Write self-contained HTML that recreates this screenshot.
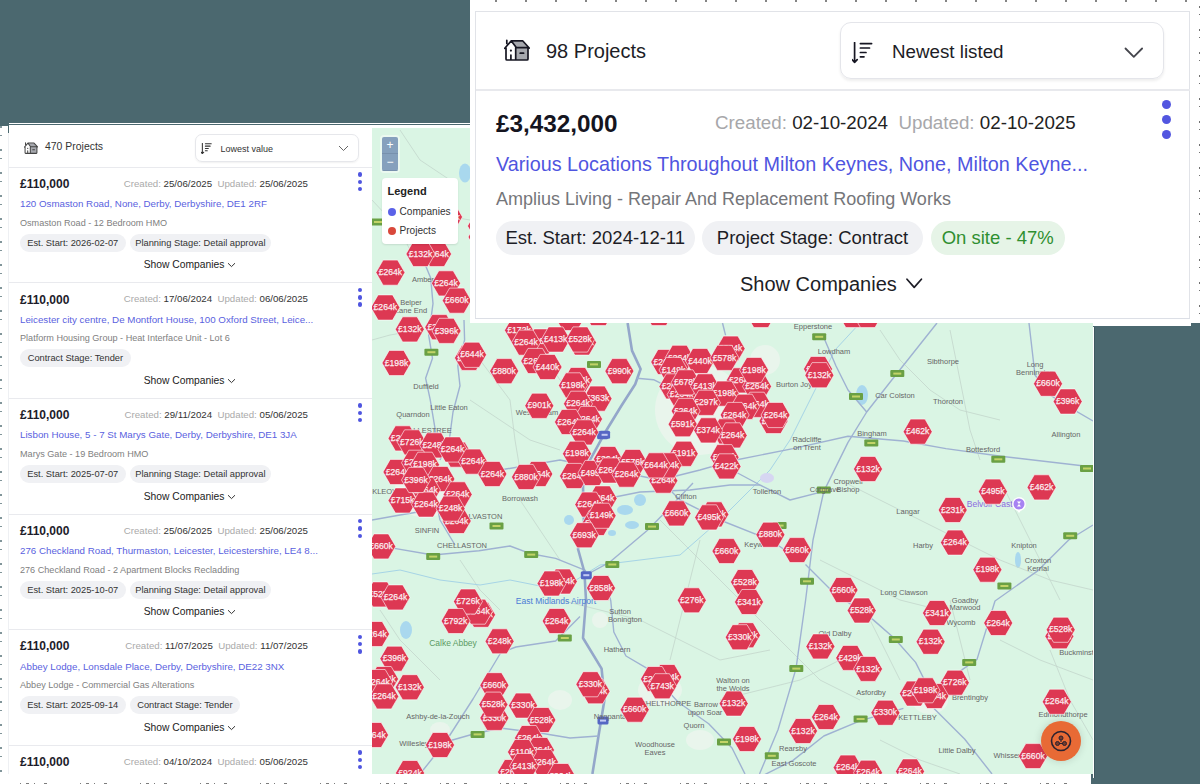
<!DOCTYPE html>
<html><head><meta charset="utf-8">
<style>
*{margin:0;padding:0;box-sizing:border-box}
html,body{width:1200px;height:784px;overflow:hidden;background:#4b686f;font-family:"Liberation Sans",sans-serif;position:relative}
#left{position:absolute;left:0;top:123px;width:372px;height:651px;background:#fff;overflow:hidden}
#lframe{position:absolute;left:8px;top:2px;width:364px;height:649px;border-left:1px solid #eef0f3}
#lvline{position:absolute;left:8px;top:0;width:1px;height:10px;background:#4b686f}
#lslate{position:absolute;left:0;top:0;width:8px;height:3.3px;background:#4b686f}
#lmarks{position:absolute;left:0;top:3px;width:2px;height:648px;opacity:.7;background:repeating-linear-gradient(180deg,#4b686f 0 2px,transparent 2px 9px,#4b686f 9px 10px,transparent 10px 23px)}
#bmarks{position:absolute;left:0;top:8.5px;width:1091px;height:1.5px;opacity:.7;background:repeating-linear-gradient(90deg,transparent 0 20px,#444 20px 21px,transparent 21px 26px,#444 26px 29px,transparent 29px 34px,#444 34px 35px,transparent 35px 44px,#444 44px 47px,transparent 47px 60px)}
#tmarks{position:absolute;left:9px;top:0;width:720px;height:1.5px;opacity:.6;background:repeating-linear-gradient(90deg,transparent 0 16px,#333 16px 18px,transparent 18px 30px)}
#rborder{position:absolute;left:1093px;top:326px;width:2px;height:452px;background:#fff;border-right:1px solid #3e5860}
#lhead{position:absolute;left:9px;top:1px;width:363px;height:43px}
#lhouse{position:absolute;left:15px;top:16px}
#lcount{position:absolute;left:36px;top:17.3px;font-size:10.45px;color:#333}
#lsort{position:absolute;left:185.5px;top:9.7px;width:164px;height:28.5px;border:1px solid #e6e7eb;border-radius:7px;box-shadow:0 1px 2px rgba(0,0,0,.06)}
#lsort svg{position:absolute;left:5.5px;top:8.3px}
#lsort span{position:absolute;left:25px;top:9px;font-size:9px;color:#333}
#lsort .chev{left:142.5px;top:10.5px}
#map{position:absolute;left:372px;top:125px;width:721px;height:649px;background:#daf5e4;overflow:hidden}
#bottom{position:absolute;left:0;top:774px;width:1091px;height:10px;background:#fff}
#rcorner{position:absolute;left:1193px;top:321px;width:7px;height:6px;background:#4b686f}
#top{position:absolute;left:470px;top:0;width:730px;height:323px;background:#fff}
#tframe{position:absolute;left:5px;top:11px;width:715px;height:308px;border:1px solid #e1e3e8;border-bottom:none}
#tframe:after{content:"";position:absolute;left:-1px;right:-1px;bottom:0;height:1px;background:#dcdfe6}
#thouse{position:absolute;left:34px;top:39px}
#tcount{position:absolute;left:76px;top:40px;font-size:20px;color:#1d1d26}
#tsort{position:absolute;left:370px;top:22px;width:324px;height:57px;border:1px solid #e4e5ea;border-radius:11px;box-shadow:0 2px 3px rgba(0,0,0,.07)}
#tsort svg{position:absolute;left:11px;top:19px}
#tsort span{position:absolute;left:51px;top:18.2px;font-size:18.75px;color:#1d1d26}
#tsort .chev{left:283px;top:23.5px}
#tdiv{position:absolute;left:6px;top:89px;width:714px;height:2px;background:#e8e9ed}
#tprice{position:absolute;left:26px;top:110px;font-size:24.3px;font-weight:bold;color:#15151f}
#tdates{position:absolute;left:245px;top:112px;font-size:18.75px;color:#a7a7aa;white-space:nowrap}
#tdates b{font-weight:normal;color:#222}
.tdot{position:absolute;left:692px;width:9px;height:9px;border-radius:50%;background:#5256e0}
#taddr{position:absolute;left:26px;top:153px;font-size:19.8px;color:#4f55e0;white-space:nowrap}
#tsub{position:absolute;left:26px;top:189px;font-size:18px;color:#75767a;white-space:nowrap}
#tchips{position:absolute;left:26px;top:221px;display:flex;gap:7.5px}
.tchip{height:34px;line-height:34px;border-radius:17px;background:#f0f1f4;font-size:18.5px;color:#1d1d26;text-align:center;white-space:nowrap;overflow:hidden}
.tchip.green{background:#e6f4e7;color:#2f8f30}
#tshow{position:absolute;left:270px;top:273px;font-size:20px;color:#1d1d26;white-space:nowrap}
.card{position:absolute;left:9px;width:363px;height:116px;border-top:1px solid #e9eaee}
.price{position:absolute;left:11px;top:9.3px;font-weight:bold;font-size:12px;color:#1d1d2b}
.dates{position:absolute;right:64px;top:10px;font-size:9.7px;color:#aaa;white-space:nowrap}
.dates b{font-weight:normal;color:#333}
.addr{position:absolute;left:11px;top:30.5px;font-size:9.75px;color:#5a5fe0;white-space:nowrap}
.sub{position:absolute;left:11px;top:50px;font-size:9.1px;color:#808080;white-space:nowrap}
.chips{position:absolute;left:11px;top:66px;display:flex;gap:4px}
.chip{height:18px;line-height:18px;border-radius:9px;background:#f0f1f4;font-size:9.3px;color:#333;text-align:center;white-space:nowrap;overflow:hidden}
.show{position:absolute;left:6px;top:91.7px;width:350px;text-align:center;font-size:10.3px;color:#222}
.dot{position:absolute;left:349px;width:4.4px;height:4.4px;border-radius:50%;background:#4f55e0}
.hx{fill:#dd3853;stroke:#fff;stroke-width:0.7;stroke-opacity:.85}
.ht{font-family:"Liberation Sans",sans-serif;font-size:9.4px;fill:#fbeef1;stroke:#fbeef1;stroke-width:.25;text-anchor:middle}
#zc{position:absolute;left:10px;top:12px;width:16px;height:34px;border-radius:2px;overflow:hidden;box-shadow:0 0 0 2px rgba(255,255,255,.45)}
.zb{position:absolute;left:0;top:0;width:16px;height:17px;background:#86a0bd;color:#fff;font-size:12px;line-height:16px;text-align:center;border-bottom:1px solid #7890ad}
#legend{position:absolute;left:9.5px;top:53px;width:76px;height:66px;background:#fff;border-radius:4px;box-shadow:0 1px 2px rgba(0,0,0,.1)}
#lgt{position:absolute;left:6px;top:7px;font-size:11px;font-weight:bold;color:#222}
.lgi{position:absolute;left:6px;font-size:10.1px;color:#333;white-space:nowrap;padding-left:12px;line-height:12px}
.lgi span{position:absolute;left:0;top:2px;width:8px;height:8px;border-radius:50%}
#fab{position:absolute;left:669px;top:596px;width:40px;height:40px;border-radius:50%;background:#e86a35;box-shadow:0 0 8px rgba(0,0,0,.15)}
#fab svg{position:absolute;left:9px;top:9px}
.ra{fill:none;stroke:#9fb2d2;stroke-width:1.4;stroke-linejoin:round}
.rm{fill:none;stroke:#c3d5cc;stroke-width:0.8}
.rv{fill:none;stroke:#a6d4e6;stroke-width:1}
.pl{font-family:"Liberation Sans",sans-serif;font-size:7.5px;fill:#666;text-anchor:middle}
#rmarks{position:absolute;left:728.5px;top:0;width:1.5px;height:320px;opacity:.7;background:repeating-linear-gradient(180deg,transparent 0 6px,#333 6px 8px,transparent 8px 14px,#333 14px 15px,transparent 15px 23px)}
.m1{stroke-width:2.6;stroke:#94a7ca}
#mtop{position:absolute;left:372px;top:122.5px;width:99px;height:5px;background:#fff}
#mline{position:absolute;left:9px;top:124px;width:462px;height:1px;background:#4b686f}
#rstrip{position:absolute;left:1093px;top:323px;width:98px;height:3.5px;background:#fff;border-bottom:1px solid #4b686f}
#rvl{position:absolute;left:1191px;top:316px;width:1px;height:10px;background:#4b686f}

</style></head><body>
<div id="left">
<div id="lframe"></div><div id="lvline"></div><div id="lslate"></div><div id="lmarks"></div>
  <div id="lhead">
    <div id="lhouse"><svg width="14" height="12" viewBox="0 0 26 22"><path d="M7.5 2.2 L12 8.5 H24 V21 H11.5 V8.5Z M7.5 2.2 H18.6 L24.5 8.5 H12Z" fill="#a6a8ae"/><path d="M0.8 9.3 L7.3 1.8 H18.6 L25.2 9 M2 9 V20 Q2 21 3 21 H23 Q24 21 24 20 V8.6 M7.5 2.2 L12.3 8.6 H24.5 M11.7 8.6 V21 M2.8 1.3 V4.4 M6.9 16 V21 M16.2 14.2 H19.6" fill="none" stroke="#444" stroke-width="1.9" stroke-linejoin="round" stroke-linecap="round"/><circle cx="6.9" cy="11.6" r="1.2" fill="#444"/></svg></div>
    <div id="lcount">470 Projects</div>
    <div id="lsort"><svg width="11.5" height="11.5" viewBox="0 0 22 22"><path d="M2.6 0.6 V20.3 M0 17.6 L2.6 20.3 L5.2 17.6 M8.4 1.6 H19.6 M8.4 6 H17.5 M8.4 10.5 H14 M8.4 14.8 H12" fill="none" stroke="#333" stroke-width="2" stroke-linecap="round" stroke-linejoin="round"/></svg><span>Lowest value</span><svg class="chev" width="11" height="7" viewBox="0 0 11 7"><path d="M1 1 L5.5 5.5 L10 1" fill="none" stroke="#555" stroke-width="0.9"/></svg></div>
  </div>
  <div class="card" style="top:43.7px"><div class="price">£110,000</div><div class="dates">Created: <b>25/06/2025</b>&nbsp; Updated: <b>25/06/2025</b></div><div class="dot" style="top:4.5px"></div><div class="dot" style="top:11.85px"></div><div class="dot" style="top:19.2px"></div><div class="addr">120 Osmaston Road, None, Derby, Derbyshire, DE1 2RF</div><div class="sub">Osmaston Road - 12 Bedroom HMO</div><div class="chips"><div class="chip" style="width:105.5px">Est. Start: 2026-02-07</div><div class="chip" style="width:141.8px">Planning Stage: Detail approval</div></div><div class="show">Show Companies <svg width="9" height="6" viewBox="0 0 9 6"><path d="M1 1.2 L4.5 4.6 L8 1.2" fill="none" stroke="#333" stroke-width="1"/></svg></div></div><div class="card" style="top:159.3px"><div class="price">£110,000</div><div class="dates">Created: <b>17/06/2024</b>&nbsp; Updated: <b>06/06/2025</b></div><div class="dot" style="top:4.5px"></div><div class="dot" style="top:11.85px"></div><div class="dot" style="top:19.2px"></div><div class="addr">Leicester city centre, De Montfort House, 100 Oxford Street, Leice...</div><div class="sub">Platform Housing Group - Heat Interface Unit - Lot 6</div><div class="chips"><div class="chip" style="width:110.8px">Contract Stage: Tender</div></div><div class="show">Show Companies <svg width="9" height="6" viewBox="0 0 9 6"><path d="M1 1.2 L4.5 4.6 L8 1.2" fill="none" stroke="#333" stroke-width="1"/></svg></div></div><div class="card" style="top:274.9px"><div class="price">£110,000</div><div class="dates">Created: <b>29/11/2024</b>&nbsp; Updated: <b>05/06/2025</b></div><div class="dot" style="top:4.5px"></div><div class="dot" style="top:11.85px"></div><div class="dot" style="top:19.2px"></div><div class="addr">Lisbon House, 5 - 7 St Marys Gate, Derby, Derbyshire, DE1 3JA</div><div class="sub">Marys Gate - 19 Bedroom HMO</div><div class="chips"><div class="chip" style="width:105.5px">Est. Start: 2025-07-07</div><div class="chip" style="width:141.8px">Planning Stage: Detail approval</div></div><div class="show">Show Companies <svg width="9" height="6" viewBox="0 0 9 6"><path d="M1 1.2 L4.5 4.6 L8 1.2" fill="none" stroke="#333" stroke-width="1"/></svg></div></div><div class="card" style="top:390.5px"><div class="price">£110,000</div><div class="dates">Created: <b>25/06/2025</b>&nbsp; Updated: <b>25/06/2025</b></div><div class="dot" style="top:4.5px"></div><div class="dot" style="top:11.85px"></div><div class="dot" style="top:19.2px"></div><div class="addr">276 Checkland Road, Thurmaston, Leicester, Leicestershire, LE4 8...</div><div class="sub">276 Checkland Road - 2 Apartment Blocks Recladding</div><div class="chips"><div class="chip" style="width:105.5px">Est. Start: 2025-10-07</div><div class="chip" style="width:141.8px">Planning Stage: Detail approval</div></div><div class="show">Show Companies <svg width="9" height="6" viewBox="0 0 9 6"><path d="M1 1.2 L4.5 4.6 L8 1.2" fill="none" stroke="#333" stroke-width="1"/></svg></div></div><div class="card" style="top:506.1px"><div class="price">£110,000</div><div class="dates">Created: <b>11/07/2025</b>&nbsp; Updated: <b>11/07/2025</b></div><div class="dot" style="top:4.5px"></div><div class="dot" style="top:11.85px"></div><div class="dot" style="top:19.2px"></div><div class="addr">Abbey Lodge, Lonsdale Place, Derby, Derbyshire, DE22 3NX</div><div class="sub">Abbey Lodge - Commercial Gas Alterations</div><div class="chips"><div class="chip" style="width:105.5px">Est. Start: 2025-09-14</div><div class="chip" style="width:110.8px">Contract Stage: Tender</div></div><div class="show">Show Companies <svg width="9" height="6" viewBox="0 0 9 6"><path d="M1 1.2 L4.5 4.6 L8 1.2" fill="none" stroke="#333" stroke-width="1"/></svg></div></div><div class="card" style="top:621.7px"><div class="price">£110,000</div><div class="dates">Created: <b>04/10/2024</b>&nbsp; Updated: <b>05/06/2025</b></div><div class="dot" style="top:4.5px"></div><div class="dot" style="top:11.85px"></div><div class="dot" style="top:19.2px"></div></div>
</div>
<div id="map"><svg width="721" height="649" viewBox="372 125 721 649" style="position:absolute;left:0;top:0">
<ellipse cx="425" cy="490" rx="30" ry="28" fill="#e9f5ec"/>
<ellipse cx="700" cy="410" rx="45" ry="45" fill="#e9f5ec"/>
<ellipse cx="660" cy="690" rx="22" ry="16" fill="#e9f5ec"/>
<ellipse cx="930" cy="700" rx="18" ry="14" fill="#e9f5ec"/>
<ellipse cx="600" cy="620" rx="8" ry="8" fill="#e9f5ec"/>
<ellipse cx="765" cy="360" rx="15" ry="15" fill="#e9f5ec"/>
<ellipse cx="560" cy="700" rx="12" ry="10" fill="#e9f5ec"/>
<ellipse cx="440" cy="730" rx="10" ry="8" fill="#e9f5ec"/>
<ellipse cx="700" cy="740" rx="14" ry="10" fill="#e9f5ec"/>
<ellipse cx="465" cy="173" rx="6" ry="9.5" fill="#a9d8ee"/>
<ellipse cx="406" cy="630" rx="6" ry="9" fill="#a9d8ee"/>
<ellipse cx="625" cy="510" rx="8" ry="5" fill="#a9d8ee"/>
<ellipse cx="640" cy="500" rx="6" ry="6" fill="#a9d8ee"/>
<ellipse cx="632" cy="525" rx="7" ry="4" fill="#a9d8ee"/>
<ellipse cx="569" cy="520" rx="5" ry="5" fill="#a9d8ee"/>
<ellipse cx="612" cy="533" rx="4" ry="3" fill="#a9d8ee"/>
<ellipse cx="1018" cy="560" rx="3" ry="8" fill="#a9d8ee"/>
<ellipse cx="862" cy="395" rx="6" ry="10" fill="#a9d8ee"/>
<path d="M372.0 340.0 L390.0 335.0 L420.0 330.0" class="rm"/>
<path d="M520.0 320.0 L540.0 350.0 L560.0 380.0 L600.0 420.0" class="rm"/>
<path d="M470.0 400.0 L500.0 420.0 L530.0 440.0 L560.0 450.0" class="rm"/>
<path d="M480.0 360.0 L510.0 400.0 L515.0 440.0 L520.0 470.0" class="rm"/>
<path d="M660.0 520.0 L700.0 560.0 L740.0 600.0 L780.0 640.0 L820.0 680.0 L860.0 700.0" class="rm"/>
<path d="M700.0 540.0 L690.0 580.0 L680.0 620.0 L670.0 660.0" class="rm"/>
<path d="M560.0 600.0 L600.0 610.0 L640.0 620.0 L680.0 640.0 L720.0 660.0 L770.0 650.0" class="rm"/>
<path d="M840.0 480.0 L880.0 500.0 L920.0 520.0 L960.0 540.0 L1000.0 560.0 L1050.0 580.0 L1093.0 590.0" class="rm"/>
<path d="M880.0 330.0 L900.0 360.0 L930.0 390.0 L960.0 410.0 L1000.0 420.0" class="rm"/>
<path d="M950.0 330.0 L960.0 380.0 L970.0 430.0 L980.0 460.0" class="rm"/>
<path d="M1000.0 480.0 L1020.0 520.0 L1040.0 560.0 L1060.0 600.0" class="rm"/>
<path d="M860.0 600.0 L880.0 640.0 L900.0 680.0" class="rm"/>
<path d="M950.0 600.0 L960.0 640.0 L970.0 680.0" class="rm"/>
<path d="M1000.0 640.0 L1040.0 660.0 L1093.0 680.0" class="rm"/>
<path d="M820.0 560.0 L860.0 580.0 L900.0 600.0 L940.0 610.0" class="rm"/>
<path d="M720.0 700.0 L760.0 690.0 L800.0 680.0 L840.0 660.0" class="rm"/>
<path d="M380.0 610.0 L400.0 640.0 L420.0 660.0 L440.0 680.0" class="rm"/>
<path d="M460.0 560.0 L480.0 590.0 L500.0 610.0" class="rm"/>
<path d="M520.0 500.0 L540.0 530.0 L560.0 560.0" class="rm"/>
<path d="M390.0 180.0 L410.0 200.0 L440.0 215.0 L470.0 220.0" class="rm"/>
<path d="M400.0 130.0 L420.0 160.0 L450.0 180.0" class="rm"/>
<path d="M372.0 200.0 L400.0 230.0 L410.0 250.0" class="rm"/>
<path d="M1050.0 650.0 L1070.0 700.0 L1093.0 740.0" class="rm"/>
<path d="M880.0 740.0 L920.0 760.0 L960.0 774.0" class="rm"/>
<path d="M372.0 574.0 L400.0 570.0 L440.0 580.0 L480.0 585.0 L510.0 580.0 L560.0 590.0 L600.0 565.0 L640.0 560.0 L680.0 555.0 L720.0 520.0 L745.0 495.0 L770.0 470.0 L790.0 440.0 L810.0 400.0 L835.0 350.0 L860.0 323.0" class="rv"/>
<path d="M372.0 541.0 L390.0 547.6 L433.0 555.0 L479.0 550.7 L510.0 546.0 L531.0 553.8 L555.6 558.4 L586.0 570.6" class="ra"/>
<path d="M586.0 575.0 L609.0 562.7 L647.2 530.5 L662.5 515.0 L693.0 483.0" class="ra"/>
<path d="M420.0 774.0 L445.5 742.0 L473.0 699.0 L500.6 653.0 L515.9 647.0 L555.6 641.0 L580.0 616.5" class="ra"/>
<path d="M608.0 590.0 L610.8 601.0 L613.8 632.0 L626.0 656.0 L647.5 668.6 L678.0 702.0 L708.7 723.7 L732.0 748.0 L745.0 774.0" class="ra"/>
<path d="M937.0 323.0 L891.0 381.0 L866.7 412.0 L848.0 442.4 L823.8 491.4 L813.0 540.0 L805.5 601.0 L796.0 668.6 L778.0 729.8 L759.5 774.0" class="ra"/>
<path d="M732.0 460.8 L793.0 448.6 L848.0 436.3 L903.4 441.0 L946.0 448.6 L1001.0 456.2 L1093.0 467.0" class="ra"/>
<path d="M1029.0 323.0 L1035.0 375.0 L1050.0 395.0 L1066.6 405.7 L1093.0 421.0" class="ra"/>
<path d="M824.0 338.0 L836.0 366.0 L848.0 390.0 L866.7 412.0" class="ra"/>
<path d="M946.0 680.8 L977.0 659.4 L995.0 601.0 L1038.0 570.6 L1068.7 540.0 L1093.0 525.0" class="ra"/>
<path d="M805.5 564.5 L833.0 592.0 L873.0 619.6 L894.0 638.0 L915.6 662.4 L928.0 687.0" class="ra"/>
<path d="M903.4 708.4 L860.6 720.6 L823.8 736.0 L793.0 760.4 L762.6 775.7" class="ra"/>
<path d="M934.0 708.4 L964.6 739.0 L992.0 774.0" class="ra"/>
<path d="M418.0 247.4 L430.7 278.0 L433.0 303.6 L428.7 335.3 L432.5 358.3 L425.6 378.2 L430.2 399.6 L434.8 427.2 L436.3 440.0 L430.0 470.0 L440.0 520.0 L455.0 545.0" class="ra"/>
<path d="M464.0 320.0 L464.6 340.0 L457.8 366.0 L460.0 385.8 L453.0 412.0 L449.3 440.0 L440.0 460.0" class="ra"/>
<path d="M627.6 323.0 L632.0 350.6 L640.6 369.0 L635.2 384.3 L621.4 405.8 L604.6 433.3 L590.0 460.0 L583.0 486.0 L584.0 526.0 L578.0 549.0 L584.4 572.0 L586.0 600.0 L583.0 638.0 L601.6 668.6 L604.6 699.0 L598.5 736.0 L592.4 774.0" class="ra m1"/>
<path d="M636.8 378.2 L653.6 379.7 L669.0 387.4" class="ra"/>
<path d="M500.0 470.0 L560.0 460.0 L610.0 470.0 L660.0 480.0 L700.0 470.0 L732.0 460.8" class="ra"/>
<path d="M372.0 520.0 L400.0 515.0 L430.0 510.0" class="ra"/>
<path d="M732.0 470.0 L760.0 485.0 L790.0 500.0 L823.8 491.4" class="ra"/>
<path d="M445.5 742.0 L470.0 735.0 L500.0 728.0 L540.0 733.0 L570.0 738.0 L598.5 736.0" class="ra"/>
<path d="M722.5 323.0 L725.6 335.3" class="ra"/>
<path d="M600.0 500.0 L640.0 492.0 L690.0 490.0 L730.0 485.0 L760.0 485.0" class="ra"/>
<path d="M660.0 480.0 L680.0 500.0 L720.0 520.0 L770.0 540.0 L800.0 560.0" class="ra"/>
<rect x="424.4" y="348.7" width="14" height="7" rx="1" fill="#6aa044"/><rect x="427.4" y="351.2" width="8" height="2" fill="#d8e070" opacity=".8"/>
<rect x="587.0" y="360.9" width="14" height="7" rx="1" fill="#6aa044"/><rect x="590.0" y="363.4" width="8" height="2" fill="#d8e070" opacity=".8"/>
<rect x="489.5" y="522.5" width="14" height="7" rx="1" fill="#6aa044"/><rect x="492.5" y="525.0" width="8" height="2" fill="#d8e070" opacity=".8"/>
<rect x="426.2" y="553.1" width="14" height="7" rx="1" fill="#6aa044"/><rect x="429.2" y="555.6" width="8" height="2" fill="#d8e070" opacity=".8"/>
<rect x="524.2" y="551.1" width="14" height="7" rx="1" fill="#6aa044"/><rect x="527.2" y="553.6" width="8" height="2" fill="#d8e070" opacity=".8"/>
<rect x="557.8" y="634.5" width="14" height="7" rx="1" fill="#6aa044"/><rect x="560.8" y="637.0" width="8" height="2" fill="#d8e070" opacity=".8"/>
<rect x="605.3" y="561.0" width="14" height="7" rx="1" fill="#6aa044"/><rect x="608.3" y="563.5" width="8" height="2" fill="#d8e070" opacity=".8"/>
<rect x="470.6" y="730.9" width="14" height="7" rx="1" fill="#6aa044"/><rect x="473.6" y="733.4" width="8" height="2" fill="#d8e070" opacity=".8"/>
<rect x="717.0" y="738.5" width="14" height="7" rx="1" fill="#6aa044"/><rect x="720.0" y="741.0" width="8" height="2" fill="#d8e070" opacity=".8"/>
<rect x="812.2" y="333.3" width="14" height="7" rx="1" fill="#6aa044"/><rect x="815.2" y="335.8" width="8" height="2" fill="#d8e070" opacity=".8"/>
<rect x="849.0" y="393.0" width="14" height="7" rx="1" fill="#6aa044"/><rect x="852.0" y="395.5" width="8" height="2" fill="#d8e070" opacity=".8"/>
<rect x="890.3" y="370.1" width="14" height="7" rx="1" fill="#6aa044"/><rect x="893.3" y="372.6" width="8" height="2" fill="#d8e070" opacity=".8"/>
<rect x="816.8" y="486.5" width="14" height="7" rx="1" fill="#6aa044"/><rect x="819.8" y="489.0" width="8" height="2" fill="#d8e070" opacity=".8"/>
<rect x="864.3" y="439.5" width="14" height="7" rx="1" fill="#6aa044"/><rect x="867.3" y="442.0" width="8" height="2" fill="#d8e070" opacity=".8"/>
<rect x="991.3" y="455.8" width="14" height="7" rx="1" fill="#6aa044"/><rect x="994.3" y="458.3" width="8" height="2" fill="#d8e070" opacity=".8"/>
<rect x="1080.0" y="465.0" width="14" height="7" rx="1" fill="#6aa044"/><rect x="1083.0" y="467.5" width="8" height="2" fill="#d8e070" opacity=".8"/>
<rect x="1063.2" y="532.3" width="14" height="7" rx="1" fill="#6aa044"/><rect x="1066.2" y="534.8" width="8" height="2" fill="#d8e070" opacity=".8"/>
<rect x="997.4" y="582.5" width="14" height="7" rx="1" fill="#6aa044"/><rect x="1000.4" y="585.0" width="8" height="2" fill="#d8e070" opacity=".8"/>
<rect x="962.2" y="658.9" width="14" height="7" rx="1" fill="#6aa044"/><rect x="965.2" y="661.4" width="8" height="2" fill="#d8e070" opacity=".8"/>
<rect x="853.6" y="715.5" width="14" height="7" rx="1" fill="#6aa044"/><rect x="856.6" y="718.0" width="8" height="2" fill="#d8e070" opacity=".8"/>
<rect x="888.8" y="636.0" width="14" height="7" rx="1" fill="#6aa044"/><rect x="891.8" y="638.5" width="8" height="2" fill="#d8e070" opacity=".8"/>
<rect x="800.0" y="577.8" width="14" height="7" rx="1" fill="#6aa044"/><rect x="803.0" y="580.3" width="8" height="2" fill="#d8e070" opacity=".8"/>
<rect x="789.3" y="665.1" width="14" height="7" rx="1" fill="#6aa044"/><rect x="792.3" y="667.6" width="8" height="2" fill="#d8e070" opacity=".8"/>
<rect x="764.8" y="752.3" width="14" height="7" rx="1" fill="#6aa044"/><rect x="767.8" y="754.8" width="8" height="2" fill="#d8e070" opacity=".8"/>
<rect x="645.0" y="523.1" width="14" height="7" rx="1" fill="#6aa044"/><rect x="648.0" y="525.6" width="8" height="2" fill="#d8e070" opacity=".8"/>
<rect x="772.6" y="522.1" width="14" height="7" rx="1" fill="#6aa044"/><rect x="775.6" y="524.6" width="8" height="2" fill="#d8e070" opacity=".8"/>
<rect x="371.0" y="218.5" width="14" height="7" rx="1" fill="#6aa044"/><rect x="374.0" y="221.0" width="8" height="2" fill="#d8e070" opacity=".8"/>
<rect x="597.1" y="431.2" width="11" height="8" rx="1.5" fill="#5567c4"/><rect x="599.6" y="434.2" width="6" height="2" fill="#dfe3ff" opacity=".8"/>
<rect x="580.8" y="571.2" width="11" height="8" rx="1.5" fill="#5567c4"/><rect x="583.3" y="574.2" width="6" height="2" fill="#dfe3ff" opacity=".8"/>
<rect x="597.5" y="716.6" width="11" height="8" rx="1.5" fill="#5567c4"/><rect x="600.0" y="719.6" width="6" height="2" fill="#dfe3ff" opacity=".8"/>
<rect x="599.1" y="430.8" width="11" height="8" rx="1.5" fill="#5567c4"/><rect x="601.6" y="433.8" width="6" height="2" fill="#dfe3ff" opacity=".8"/>
<ellipse cx="767" cy="478" rx="7" ry="5" fill="#d6d6f2"/>
<text x="556" y="604" class="pl" style="fill:#4b7bd6;font-size:8.5px">East Midlands Airport</text><text x="453" y="646" class="pl" style="fill:#5b9b63;font-size:8.5px">Calke Abbey</text>
<text x="993" y="507" class="pl" style="fill:#8c6be0;font-size:8.5px">Belvoir Castle</text><path d="M1016 509 L1019 513 L1022 509Z" fill="#fff"/><circle cx="1019" cy="504" r="6.2" fill="#a783f2" stroke="#fff" stroke-width="1.4"/><path d="M1017 501.5 H1021 L1019 504 L1021 506.5 H1017 L1019 504Z" fill="#fff"/>
<text x="426" y="389" class="pl">Duffield</text>
<text x="413" y="417" class="pl">Quarndon</text>
<text x="449" y="410" class="pl">Little Eaton</text>
<text x="520" y="501" class="pl">Borrowash</text>
<text x="427" y="533" class="pl">SINFIN</text>
<text x="462" y="548" class="pl">CHELLASTON</text>
<text x="438" y="719" class="pl">Ashby-de-la-Zouch</text>
<text x="414" y="746" class="pl">Willesley</text>
<text x="617" y="652" class="pl">Hathern</text>
<text x="620" y="614" class="pl">Sutton</text>
<text x="625" y="622" class="pl">Bonington</text>
<text x="655" y="747" class="pl">Woodhouse</text>
<text x="655" y="755" class="pl">Eaves</text>
<text x="694" y="728" class="pl">Quorn</text>
<text x="706" y="707" class="pl">Barrow</text>
<text x="705" y="715" class="pl">upon Soar</text>
<text x="733" y="683" class="pl">Walton on</text>
<text x="733" y="691" class="pl">the Wolds</text>
<text x="666" y="706" class="pl">SHELTHORPE</text>
<text x="612" y="719" class="pl">Nanpantan</text>
<text x="813" y="329" class="pl">Epperstone</text>
<text x="834" y="354" class="pl">Lowdham</text>
<text x="798" y="387" class="pl">Burton Joyce</text>
<text x="943" y="364" class="pl">Sibthorpe</text>
<text x="895" y="398" class="pl">Car Colston</text>
<text x="948" y="404" class="pl">Thoroton</text>
<text x="872" y="436" class="pl">Bingham</text>
<text x="807" y="442" class="pl">Radcliffe</text>
<text x="807" y="450" class="pl">on Trent</text>
<text x="983" y="452" class="pl">Bottesford</text>
<text x="1066" y="437" class="pl">Allington</text>
<text x="1035" y="367" class="pl">Long</text>
<text x="1035" y="375" class="pl">Bennington</text>
<text x="848" y="484" class="pl">Cropwell</text>
<text x="848" y="492" class="pl">Bishop</text>
<text x="825" y="492" class="pl">Cotgrave</text>
<text x="767" y="494" class="pl">Tollerton</text>
<text x="908" y="514" class="pl">Langar</text>
<text x="923" y="548" class="pl">Harby</text>
<text x="1024" y="548" class="pl">Knipton</text>
<text x="1038" y="563" class="pl">Croxton</text>
<text x="1038" y="571" class="pl">Kerrial</text>
<text x="904" y="595" class="pl">Long Clawson</text>
<text x="965" y="603" class="pl">Goadby</text>
<text x="965" y="610" class="pl">Marwood</text>
<text x="961" y="625" class="pl">Wycomb</text>
<text x="835" y="636" class="pl">Old Dalby</text>
<text x="871" y="695" class="pl">Asfordby</text>
<text x="914" y="720" class="pl">E KETTLEBY</text>
<text x="970" y="700" class="pl">Brentingby</text>
<text x="957" y="753" class="pl">Little Dalby</text>
<text x="793" y="751" class="pl">Rearsby</text>
<text x="794" y="766" class="pl">East Goscote</text>
<text x="1080" y="655" class="pl">Buckminster</text>
<text x="1063" y="717" class="pl">Edmondthorpe</text>
<text x="1015" y="758" class="pl">Whissendine</text>
<text x="423" y="282" class="pl">Amber</text>
<text x="411" y="305" class="pl">Belper</text>
<text x="411" y="313" class="pl">Lane End</text>
<text x="760" y="547" class="pl">Keyworth</text>
<text x="537" y="415" class="pl">West Hallam</text>
<text x="383" y="494" class="pl">MICKLEOVER</text>
<text x="430" y="433" class="pl">ALLESTREE</text>
<text x="483" y="519" class="pl">ALVASTON</text>
<text x="686" y="499" class="pl">Clifton</text>
<polygon points="433.5,217.0 440.8,204.4 455.2,204.4 462.5,217.0 455.2,229.6 440.8,229.6" class="hx"/><text x="448.0" y="219.6" class="ht" textLength="23.5" lengthAdjust="spacingAndGlyphs">£132k</text>
<polygon points="467.5,226.0 474.8,213.4 489.2,213.4 496.5,226.0 489.2,238.6 474.8,238.6" class="hx"/><text x="482.0" y="228.6" class="ht" textLength="23.5" lengthAdjust="spacingAndGlyphs">£264k</text>
<polygon points="468.1,237.0 475.4,224.4 489.9,224.4 497.1,237.0 489.9,249.6 475.4,249.6" class="hx"/><text x="482.6" y="239.6" class="ht" textLength="23.5" lengthAdjust="spacingAndGlyphs">£264k</text>
<polygon points="422.5,254.0 429.8,241.4 444.2,241.4 451.5,254.0 444.2,266.6 429.8,266.6" class="hx"/><text x="437.0" y="256.6" class="ht" textLength="23.5" lengthAdjust="spacingAndGlyphs">£264k</text>
<polygon points="406.0,254.0 413.2,241.4 427.8,241.4 435.0,254.0 427.8,266.6 413.2,266.6" class="hx"/><text x="420.5" y="256.6" class="ht" textLength="23.5" lengthAdjust="spacingAndGlyphs">£132k</text>
<polygon points="375.9,272.6 383.1,260.1 397.6,260.1 404.9,272.6 397.6,285.2 383.1,285.2" class="hx"/><text x="390.4" y="275.2" class="ht" textLength="23.5" lengthAdjust="spacingAndGlyphs">£264k</text>
<polygon points="431.5,283.3 438.8,270.8 453.2,270.8 460.5,283.3 453.2,295.9 438.8,295.9" class="hx"/><text x="446.0" y="285.9" class="ht" textLength="23.5" lengthAdjust="spacingAndGlyphs">£264k</text>
<polygon points="442.3,300.6 449.6,288.1 464.1,288.1 471.3,300.6 464.1,313.2 449.6,313.2" class="hx"/><text x="456.8" y="303.2" class="ht" textLength="23.5" lengthAdjust="spacingAndGlyphs">£660k</text>
<polygon points="370.8,307.5 378.1,294.9 392.6,294.9 399.8,307.5 392.6,320.1 378.1,320.1" class="hx"/><text x="385.3" y="310.1" class="ht" textLength="23.5" lengthAdjust="spacingAndGlyphs">£264k</text>
<polygon points="424.8,327.2 432.1,314.6 446.6,314.6 453.8,327.2 446.6,339.8 432.1,339.8" class="hx"/><text x="439.3" y="329.8" class="ht" textLength="23.5" lengthAdjust="spacingAndGlyphs">£264k</text>
<polygon points="432.0,330.9 439.2,318.3 453.8,318.3 461.0,330.9 453.8,343.4 439.2,343.4" class="hx"/><text x="446.5" y="333.5" class="ht" textLength="23.5" lengthAdjust="spacingAndGlyphs">£396k</text>
<polygon points="395.3,329.3 402.6,316.8 417.1,316.8 424.3,329.3 417.1,341.9 402.6,341.9" class="hx"/><text x="409.8" y="331.9" class="ht" textLength="23.5" lengthAdjust="spacingAndGlyphs">£132k</text>
<polygon points="454.5,357.9 461.8,345.3 476.2,345.3 483.5,357.9 476.2,370.4 461.8,370.4" class="hx"/><text x="469.0" y="360.5" class="ht" textLength="23.5" lengthAdjust="spacingAndGlyphs">£264k</text>
<polygon points="457.5,354.8 464.8,342.2 479.2,342.2 486.5,354.8 479.2,367.4 464.8,367.4" class="hx"/><text x="472.0" y="357.4" class="ht" textLength="23.5" lengthAdjust="spacingAndGlyphs">£644k</text>
<polygon points="382.0,363.0 389.2,350.4 403.8,350.4 411.0,363.0 403.8,375.6 389.2,375.6" class="hx"/><text x="396.5" y="365.6" class="ht" textLength="23.5" lengthAdjust="spacingAndGlyphs">£198k</text>
<polygon points="489.7,371.1 496.9,358.6 511.4,358.6 518.7,371.1 511.4,383.7 496.9,383.7" class="hx"/><text x="504.2" y="373.7" class="ht" textLength="23.5" lengthAdjust="spacingAndGlyphs">£880k</text>
<polygon points="555.5,318.0 562.8,305.4 577.2,305.4 584.5,318.0 577.2,330.6 562.8,330.6" class="hx"/><text x="570.0" y="320.6" class="ht" textLength="23.5" lengthAdjust="spacingAndGlyphs">£264k</text>
<polygon points="584.0,313.0 591.2,300.4 605.8,300.4 613.0,313.0 605.8,325.6 591.2,325.6" class="hx"/><text x="598.5" y="315.6" class="ht" textLength="23.5" lengthAdjust="spacingAndGlyphs">£264k</text>
<polygon points="504.5,330.3 511.8,317.8 526.2,317.8 533.5,330.3 526.2,342.9 511.8,342.9" class="hx"/><text x="519.0" y="332.9" class="ht" textLength="23.5" lengthAdjust="spacingAndGlyphs">£172k</text>
<polygon points="526.9,341.5 534.1,328.9 548.6,328.9 555.9,341.5 548.6,354.1 534.1,354.1" class="hx"/><text x="541.4" y="344.1" class="ht" textLength="23.5" lengthAdjust="spacingAndGlyphs">£264k</text>
<polygon points="511.5,342.6 518.8,330.1 533.2,330.1 540.5,342.6 533.2,355.2 518.8,355.2" class="hx"/><text x="526.0" y="345.2" class="ht" textLength="23.5" lengthAdjust="spacingAndGlyphs">£264k</text>
<polygon points="541.2,339.5 548.5,326.9 563.0,326.9 570.2,339.5 563.0,352.1 548.5,352.1" class="hx"/><text x="555.7" y="342.1" class="ht" textLength="23.5" lengthAdjust="spacingAndGlyphs">£413k</text>
<polygon points="567.5,342.5 574.8,329.9 589.2,329.9 596.5,342.5 589.2,355.1 574.8,355.1" class="hx"/><text x="582.0" y="345.1" class="ht" textLength="23.5" lengthAdjust="spacingAndGlyphs">£264k</text>
<polygon points="565.7,339.5 573.0,326.9 587.5,326.9 594.7,339.5 587.5,352.1 573.0,352.1" class="hx"/><text x="580.2" y="342.1" class="ht" textLength="23.5" lengthAdjust="spacingAndGlyphs">£528k</text>
<polygon points="520.8,361.0 528.0,348.4 542.5,348.4 549.8,361.0 542.5,373.6 528.0,373.6" class="hx"/><text x="535.3" y="363.6" class="ht" textLength="23.5" lengthAdjust="spacingAndGlyphs">£264k</text>
<polygon points="533.0,367.0 540.2,354.4 554.8,354.4 562.0,367.0 554.8,379.6 540.2,379.6" class="hx"/><text x="547.5" y="369.6" class="ht" textLength="23.5" lengthAdjust="spacingAndGlyphs">£440k</text>
<polygon points="563.5,380.0 570.8,367.4 585.2,367.4 592.5,380.0 585.2,392.6 570.8,392.6" class="hx"/><text x="578.0" y="382.6" class="ht" textLength="23.5" lengthAdjust="spacingAndGlyphs">£264k</text>
<polygon points="558.5,385.4 565.8,372.8 580.2,372.8 587.5,385.4 580.2,397.9 565.8,397.9" class="hx"/><text x="573.0" y="388.0" class="ht" textLength="23.5" lengthAdjust="spacingAndGlyphs">£198k</text>
<polygon points="583.0,398.7 590.2,386.1 604.8,386.1 612.0,398.7 604.8,411.2 590.2,411.2" class="hx"/><text x="597.5" y="401.3" class="ht" textLength="23.5" lengthAdjust="spacingAndGlyphs">£363k</text>
<polygon points="524.8,405.8 532.0,393.2 546.5,393.2 553.8,405.8 546.5,418.4 532.0,418.4" class="hx"/><text x="539.3" y="408.4" class="ht" textLength="23.5" lengthAdjust="spacingAndGlyphs">£901k</text>
<polygon points="563.5,403.8 570.8,391.2 585.2,391.2 592.5,403.8 585.2,416.4 570.8,416.4" class="hx"/><text x="578.0" y="406.4" class="ht" textLength="23.5" lengthAdjust="spacingAndGlyphs">£264k</text>
<polygon points="573.5,419.0 580.8,406.4 595.2,406.4 602.5,419.0 595.2,431.6 580.8,431.6" class="hx"/><text x="588.0" y="421.6" class="ht" textLength="23.5" lengthAdjust="spacingAndGlyphs">£264k</text>
<polygon points="554.5,422.0 561.8,409.4 576.2,409.4 583.5,422.0 576.2,434.6 561.8,434.6" class="hx"/><text x="569.0" y="424.6" class="ht" textLength="23.5" lengthAdjust="spacingAndGlyphs">£264k</text>
<polygon points="569.7,432.3 577.0,419.8 591.5,419.8 598.7,432.3 591.5,444.9 577.0,444.9" class="hx"/><text x="584.2" y="434.9" class="ht" textLength="23.5" lengthAdjust="spacingAndGlyphs">£264k</text>
<polygon points="562.5,453.8 569.8,441.2 584.2,441.2 591.5,453.8 584.2,466.4 569.8,466.4" class="hx"/><text x="577.0" y="456.4" class="ht" textLength="23.5" lengthAdjust="spacingAndGlyphs">£198k</text>
<polygon points="559.5,476.0 566.8,463.4 581.2,463.4 588.5,476.0 581.2,488.6 566.8,488.6" class="hx"/><text x="574.0" y="478.6" class="ht" textLength="23.5" lengthAdjust="spacingAndGlyphs">£264k</text>
<polygon points="577.9,473.0 585.1,460.4 599.6,460.4 606.9,473.0 599.6,485.6 585.1,485.6" class="hx"/><text x="592.4" y="475.6" class="ht" textLength="23.5" lengthAdjust="spacingAndGlyphs">£495k</text>
<polygon points="388.1,438.3 395.4,425.8 409.9,425.8 417.1,438.3 409.9,450.9 395.4,450.9" class="hx"/><text x="402.6" y="440.9" class="ht" textLength="23.5" lengthAdjust="spacingAndGlyphs">£264k</text>
<polygon points="397.3,442.3 404.6,429.8 419.1,429.8 426.3,442.3 419.1,454.9 404.6,454.9" class="hx"/><text x="411.8" y="444.9" class="ht" textLength="23.5" lengthAdjust="spacingAndGlyphs">£726k</text>
<polygon points="419.7,445.4 426.9,432.8 441.4,432.8 448.7,445.4 441.4,457.9 426.9,457.9" class="hx"/><text x="434.2" y="448.0" class="ht" textLength="23.5" lengthAdjust="spacingAndGlyphs">£248k</text>
<polygon points="443.2,454.6 450.4,442.1 464.9,442.1 472.2,454.6 464.9,467.2 450.4,467.2" class="hx"/><text x="457.7" y="457.2" class="ht" textLength="23.5" lengthAdjust="spacingAndGlyphs">£264k</text>
<polygon points="438.1,449.5 445.4,436.9 459.9,436.9 467.1,449.5 459.9,462.1 445.4,462.1" class="hx"/><text x="452.6" y="452.1" class="ht" textLength="23.5" lengthAdjust="spacingAndGlyphs">£264k</text>
<polygon points="458.5,461.7 465.8,449.1 480.2,449.1 487.5,461.7 480.2,474.2 465.8,474.2" class="hx"/><text x="473.0" y="464.3" class="ht" textLength="23.5" lengthAdjust="spacingAndGlyphs">£264k</text>
<polygon points="477.9,474.0 485.1,461.4 499.6,461.4 506.9,474.0 499.6,486.6 485.1,486.6" class="hx"/><text x="492.4" y="476.6" class="ht" textLength="23.5" lengthAdjust="spacingAndGlyphs">£264k</text>
<polygon points="523.8,474.0 531.0,461.4 545.5,461.4 552.8,474.0 545.5,486.6 531.0,486.6" class="hx"/><text x="538.3" y="476.6" class="ht" textLength="23.5" lengthAdjust="spacingAndGlyphs">£264k</text>
<polygon points="511.5,477.0 518.8,464.4 533.2,464.4 540.5,477.0 533.2,489.6 518.8,489.6" class="hx"/><text x="526.0" y="479.6" class="ht" textLength="23.5" lengthAdjust="spacingAndGlyphs">£880k</text>
<polygon points="383.0,472.0 390.2,459.4 404.8,459.4 412.0,472.0 404.8,484.6 390.2,484.6" class="hx"/><text x="397.5" y="474.6" class="ht" textLength="23.5" lengthAdjust="spacingAndGlyphs">£264k</text>
<polygon points="401.5,462.8 408.8,450.2 423.2,450.2 430.5,462.8 423.2,475.4 408.8,475.4" class="hx"/><text x="416.0" y="465.4" class="ht" textLength="23.5" lengthAdjust="spacingAndGlyphs">£264k</text>
<polygon points="410.5,464.8 417.8,452.2 432.2,452.2 439.5,464.8 432.2,477.4 417.8,477.4" class="hx"/><text x="425.0" y="467.4" class="ht" textLength="23.5" lengthAdjust="spacingAndGlyphs">£198k</text>
<polygon points="425.9,479.0 433.1,466.4 447.6,466.4 454.9,479.0 447.6,491.6 433.1,491.6" class="hx"/><text x="440.4" y="481.6" class="ht" textLength="23.5" lengthAdjust="spacingAndGlyphs">£264k</text>
<polygon points="411.5,490.0 418.8,477.4 433.2,477.4 440.5,490.0 433.2,502.6 418.8,502.6" class="hx"/><text x="426.0" y="492.6" class="ht" textLength="23.5" lengthAdjust="spacingAndGlyphs">£264k</text>
<polygon points="443.2,494.4 450.4,481.8 464.9,481.8 472.2,494.4 464.9,506.9 450.4,506.9" class="hx"/><text x="457.7" y="497.0" class="ht" textLength="23.5" lengthAdjust="spacingAndGlyphs">£264k</text>
<polygon points="388.1,500.5 395.4,487.9 409.9,487.9 417.1,500.5 409.9,513.0 395.4,513.0" class="hx"/><text x="402.6" y="503.1" class="ht" textLength="23.5" lengthAdjust="spacingAndGlyphs">£715k</text>
<polygon points="411.5,504.6 418.8,492.1 433.2,492.1 440.5,504.6 433.2,517.1 418.8,517.1" class="hx"/><text x="426.0" y="507.2" class="ht" textLength="23.5" lengthAdjust="spacingAndGlyphs">£264k</text>
<polygon points="401.5,480.0 408.8,467.4 423.2,467.4 430.5,480.0 423.2,492.6 408.8,492.6" class="hx"/><text x="416.0" y="482.6" class="ht" textLength="23.5" lengthAdjust="spacingAndGlyphs">£396k</text>
<polygon points="442.2,521.0 449.4,508.4 463.9,508.4 471.2,521.0 463.9,533.5 449.4,533.5" class="hx"/><text x="456.7" y="523.6" class="ht" textLength="23.5" lengthAdjust="spacingAndGlyphs">£264k</text>
<polygon points="436.1,508.7 443.4,496.1 457.9,496.1 465.1,508.7 457.9,521.2 443.4,521.2" class="hx"/><text x="450.6" y="511.3" class="ht" textLength="23.5" lengthAdjust="spacingAndGlyphs">£248k</text>
<polygon points="366.7,546.4 373.9,533.9 388.4,533.9 395.7,546.4 388.4,558.9 373.9,558.9" class="hx"/><text x="381.2" y="549.0" class="ht" textLength="23.5" lengthAdjust="spacingAndGlyphs">£660k</text>
<polygon points="588.1,498.5 595.4,485.9 609.9,485.9 617.1,498.5 609.9,511.1 595.4,511.1" class="hx"/><text x="602.6" y="501.1" class="ht" textLength="23.5" lengthAdjust="spacingAndGlyphs">£264k</text>
<polygon points="574.8,504.6 582.0,492.1 596.5,492.1 603.8,504.6 596.5,517.1 582.0,517.1" class="hx"/><text x="589.3" y="507.2" class="ht" textLength="23.5" lengthAdjust="spacingAndGlyphs">£264k</text>
<polygon points="582.0,523.0 589.2,510.4 603.8,510.4 611.0,523.0 603.8,535.5 589.2,535.5" class="hx"/><text x="596.5" y="525.6" class="ht" textLength="23.5" lengthAdjust="spacingAndGlyphs">£264k</text>
<polygon points="587.1,515.8 594.4,503.2 608.9,503.2 616.1,515.8 608.9,528.3 594.4,528.3" class="hx"/><text x="601.6" y="518.4" class="ht" textLength="23.5" lengthAdjust="spacingAndGlyphs">£149k</text>
<polygon points="569.7,535.2 577.0,522.7 591.5,522.7 598.7,535.2 591.5,547.8 577.0,547.8" class="hx"/><text x="584.2" y="537.8" class="ht" textLength="23.5" lengthAdjust="spacingAndGlyphs">£693k</text>
<polygon points="548.3,581.5 555.5,569.0 570.0,569.0 577.3,581.5 570.0,594.0 555.5,594.0" class="hx"/><text x="562.8" y="584.1" class="ht" textLength="23.5" lengthAdjust="spacingAndGlyphs">£264k</text>
<polygon points="537.1,583.5 544.4,571.0 558.9,571.0 566.1,583.5 558.9,596.0 544.4,596.0" class="hx"/><text x="551.6" y="586.1" class="ht" textLength="23.5" lengthAdjust="spacingAndGlyphs">£198k</text>
<polygon points="586.5,588.0 593.8,575.5 608.2,575.5 615.5,588.0 608.2,600.5 593.8,600.5" class="hx"/><text x="601.0" y="590.6" class="ht" textLength="23.5" lengthAdjust="spacingAndGlyphs">£858k</text>
<polygon points="365.7,594.4 372.9,581.9 387.4,581.9 394.7,594.4 387.4,606.9 372.9,606.9" class="hx"/><text x="380.2" y="597.0" class="ht" textLength="23.5" lengthAdjust="spacingAndGlyphs">£528k</text>
<polygon points="381.0,597.4 388.2,584.9 402.8,584.9 410.0,597.4 402.8,609.9 388.2,609.9" class="hx"/><text x="395.5" y="600.0" class="ht" textLength="23.5" lengthAdjust="spacingAndGlyphs">£264k</text>
<polygon points="466.5,614.8 473.8,602.2 488.2,602.2 495.5,614.8 488.2,627.3 473.8,627.3" class="hx"/><text x="481.0" y="617.4" class="ht" textLength="23.5" lengthAdjust="spacingAndGlyphs">£264k</text>
<polygon points="463.5,611.7 470.8,599.2 485.2,599.2 492.5,611.7 485.2,624.2 470.8,624.2" class="hx"/><text x="478.0" y="614.3" class="ht" textLength="23.5" lengthAdjust="spacingAndGlyphs">£264k</text>
<polygon points="453.5,601.5 460.8,589.0 475.2,589.0 482.5,601.5 475.2,614.0 460.8,614.0" class="hx"/><text x="468.0" y="604.1" class="ht" textLength="23.5" lengthAdjust="spacingAndGlyphs">£726k</text>
<polygon points="441.2,621.0 448.4,608.5 462.9,608.5 470.2,621.0 462.9,633.5 448.4,633.5" class="hx"/><text x="455.7" y="623.6" class="ht" textLength="23.5" lengthAdjust="spacingAndGlyphs">£792k</text>
<polygon points="485.1,641.3 492.4,628.8 506.9,628.8 514.1,641.3 506.9,653.8 492.4,653.8" class="hx"/><text x="499.6" y="643.9" class="ht" textLength="23.5" lengthAdjust="spacingAndGlyphs">£248k</text>
<polygon points="542.2,621.0 549.5,608.5 564.0,608.5 571.2,621.0 564.0,633.5 549.5,633.5" class="hx"/><text x="556.7" y="623.6" class="ht" textLength="23.5" lengthAdjust="spacingAndGlyphs">£264k</text>
<polygon points="360.5,634.0 367.8,621.5 382.2,621.5 389.5,634.0 382.2,646.5 367.8,646.5" class="hx"/><text x="375.0" y="636.6" class="ht" textLength="23.5" lengthAdjust="spacingAndGlyphs">£264k</text>
<polygon points="379.9,658.7 387.1,646.2 401.6,646.2 408.9,658.7 401.6,671.2 387.1,671.2" class="hx"/><text x="394.4" y="661.3" class="ht" textLength="23.5" lengthAdjust="spacingAndGlyphs">£396k</text>
<polygon points="369.5,679.0 376.8,666.5 391.2,666.5 398.5,679.0 391.2,691.5 376.8,691.5" class="hx"/><text x="384.0" y="681.6" class="ht" textLength="23.5" lengthAdjust="spacingAndGlyphs">£264k</text>
<polygon points="363.5,682.0 370.8,669.5 385.2,669.5 392.5,682.0 385.2,694.5 370.8,694.5" class="hx"/><text x="378.0" y="684.6" class="ht" textLength="23.5" lengthAdjust="spacingAndGlyphs">£264k</text>
<polygon points="395.3,687.2 402.6,674.7 417.1,674.7 424.3,687.2 417.1,699.8 402.6,699.8" class="hx"/><text x="409.8" y="689.8" class="ht" textLength="23.5" lengthAdjust="spacingAndGlyphs">£132k</text>
<polygon points="369.7,696.4 376.9,683.9 391.4,683.9 398.7,696.4 391.4,708.9 376.9,708.9" class="hx"/><text x="384.2" y="699.0" class="ht" textLength="23.5" lengthAdjust="spacingAndGlyphs">£264k</text>
<polygon points="479.9,685.2 487.1,672.7 501.6,672.7 508.9,685.2 501.6,697.8 487.1,697.8" class="hx"/><text x="494.4" y="687.8" class="ht" textLength="23.5" lengthAdjust="spacingAndGlyphs">£660k</text>
<polygon points="479.9,717.9 487.1,705.4 501.6,705.4 508.9,717.9 501.6,730.4 487.1,730.4" class="hx"/><text x="494.4" y="720.5" class="ht" textLength="23.5" lengthAdjust="spacingAndGlyphs">£330k</text>
<polygon points="478.9,704.6 486.1,692.1 500.6,692.1 507.9,704.6 500.6,717.1 486.1,717.1" class="hx"/><text x="493.4" y="707.2" class="ht" textLength="23.5" lengthAdjust="spacingAndGlyphs">£528k</text>
<polygon points="508.5,705.6 515.8,693.1 530.2,693.1 537.5,705.6 530.2,718.1 515.8,718.1" class="hx"/><text x="523.0" y="708.2" class="ht" textLength="23.5" lengthAdjust="spacingAndGlyphs">£330k</text>
<polygon points="526.9,720.0 534.1,707.5 548.6,707.5 555.9,720.0 548.6,732.5 534.1,732.5" class="hx"/><text x="541.4" y="722.6" class="ht" textLength="23.5" lengthAdjust="spacingAndGlyphs">£528k</text>
<polygon points="514.5,738.0 521.8,725.5 536.2,725.5 543.5,738.0 536.2,750.5 521.8,750.5" class="hx"/><text x="529.0" y="740.6" class="ht" textLength="23.5" lengthAdjust="spacingAndGlyphs">£264k</text>
<polygon points="525.5,750.0 532.8,737.5 547.2,737.5 554.5,750.0 547.2,762.5 532.8,762.5" class="hx"/><text x="540.0" y="752.6" class="ht" textLength="23.5" lengthAdjust="spacingAndGlyphs">£264k</text>
<polygon points="529.5,762.0 536.8,749.5 551.2,749.5 558.5,762.0 551.2,774.5 536.8,774.5" class="hx"/><text x="544.0" y="764.6" class="ht" textLength="23.5" lengthAdjust="spacingAndGlyphs">£264k</text>
<polygon points="497.5,772.0 504.8,759.5 519.2,759.5 526.5,772.0 519.2,784.5 504.8,784.5" class="hx"/><text x="512.0" y="774.6" class="ht" textLength="23.5" lengthAdjust="spacingAndGlyphs">£264k</text>
<polygon points="507.5,752.0 514.8,739.5 529.2,739.5 536.5,752.0 529.2,764.5 514.8,764.5" class="hx"/><text x="522.0" y="754.6" class="ht" textLength="23.5" lengthAdjust="spacingAndGlyphs">£110k</text>
<polygon points="509.5,766.0 516.8,753.5 531.2,753.5 538.5,766.0 531.2,778.5 516.8,778.5" class="hx"/><text x="524.0" y="768.6" class="ht" textLength="23.5" lengthAdjust="spacingAndGlyphs">£413k</text>
<polygon points="546.5,776.0 553.8,763.5 568.2,763.5 575.5,776.0 568.2,788.5 553.8,788.5" class="hx"/><text x="561.0" y="778.6" class="ht" textLength="23.5" lengthAdjust="spacingAndGlyphs">£264k</text>
<polygon points="359.5,735.0 366.8,722.5 381.2,722.5 388.5,735.0 381.2,747.5 366.8,747.5" class="hx"/><text x="374.0" y="737.6" class="ht" textLength="23.5" lengthAdjust="spacingAndGlyphs">£264k</text>
<polygon points="425.5,745.0 432.8,732.5 447.2,732.5 454.5,745.0 447.2,757.5 432.8,757.5" class="hx"/><text x="440.0" y="747.6" class="ht" textLength="23.5" lengthAdjust="spacingAndGlyphs">£198k</text>
<polygon points="395.5,773.0 402.8,760.5 417.2,760.5 424.5,773.0 417.2,785.5 402.8,785.5" class="hx"/><text x="410.0" y="775.6" class="ht" textLength="23.5" lengthAdjust="spacingAndGlyphs">£924k</text>
<polygon points="581.0,691.3 588.2,678.8 602.8,678.8 610.0,691.3 602.8,703.8 588.2,703.8" class="hx"/><text x="595.5" y="693.9" class="ht" textLength="23.5" lengthAdjust="spacingAndGlyphs">£264k</text>
<polygon points="575.9,684.2 583.1,671.7 597.6,671.7 604.9,684.2 597.6,696.8 583.1,696.8" class="hx"/><text x="590.4" y="686.8" class="ht" textLength="23.5" lengthAdjust="spacingAndGlyphs">£330k</text>
<polygon points="644.5,313.0 651.8,300.4 666.2,300.4 673.5,313.0 666.2,325.6 651.8,325.6" class="hx"/><text x="659.0" y="315.6" class="ht" textLength="23.5" lengthAdjust="spacingAndGlyphs">£264k</text>
<polygon points="746.5,315.0 753.8,302.4 768.2,302.4 775.5,315.0 768.2,327.6 753.8,327.6" class="hx"/><text x="761.0" y="317.6" class="ht" textLength="23.5" lengthAdjust="spacingAndGlyphs">£264k</text>
<polygon points="604.9,371.1 612.1,358.6 626.6,358.6 633.9,371.1 626.6,383.7 612.1,383.7" class="hx"/><text x="619.4" y="373.7" class="ht" textLength="23.5" lengthAdjust="spacingAndGlyphs">£990k</text>
<polygon points="650.8,362.0 658.0,349.4 672.5,349.4 679.8,362.0 672.5,374.6 658.0,374.6" class="hx"/><text x="665.3" y="364.6" class="ht" textLength="23.5" lengthAdjust="spacingAndGlyphs">£264k</text>
<polygon points="665.1,357.9 672.4,345.3 686.9,345.3 694.1,357.9 686.9,370.4 672.4,370.4" class="hx"/><text x="679.6" y="360.5" class="ht" textLength="23.5" lengthAdjust="spacingAndGlyphs">£264k</text>
<polygon points="685.5,361.0 692.8,348.4 707.2,348.4 714.5,361.0 707.2,373.6 692.8,373.6" class="hx"/><text x="700.0" y="363.6" class="ht" textLength="23.5" lengthAdjust="spacingAndGlyphs">£440k</text>
<polygon points="716.1,348.7 723.4,336.1 737.9,336.1 745.1,348.7 737.9,361.2 723.4,361.2" class="hx"/><text x="730.6" y="351.3" class="ht" textLength="23.5" lengthAdjust="spacingAndGlyphs">£264k</text>
<polygon points="710.0,357.9 717.2,345.3 731.8,345.3 739.0,357.9 731.8,370.4 717.2,370.4" class="hx"/><text x="724.5" y="360.5" class="ht" textLength="23.5" lengthAdjust="spacingAndGlyphs">£578k</text>
<polygon points="659.0,370.0 666.2,357.4 680.8,357.4 688.0,370.0 680.8,382.6 666.2,382.6" class="hx"/><text x="673.5" y="372.6" class="ht" textLength="23.5" lengthAdjust="spacingAndGlyphs">£149k</text>
<polygon points="659.0,386.4 666.2,373.8 680.8,373.8 688.0,386.4 680.8,398.9 666.2,398.9" class="hx"/><text x="673.5" y="389.0" class="ht" textLength="23.5" lengthAdjust="spacingAndGlyphs">£264k</text>
<polygon points="667.1,394.6 674.4,382.1 688.9,382.1 696.1,394.6 688.9,407.2 674.4,407.2" class="hx"/><text x="681.6" y="397.2" class="ht" textLength="23.5" lengthAdjust="spacingAndGlyphs">£264k</text>
<polygon points="671.2,382.3 678.5,369.8 693.0,369.8 700.2,382.3 693.0,394.9 678.5,394.9" class="hx"/><text x="685.7" y="384.9" class="ht" textLength="23.5" lengthAdjust="spacingAndGlyphs">£678k</text>
<polygon points="690.5,386.4 697.8,373.8 712.2,373.8 719.5,386.4 712.2,398.9 697.8,398.9" class="hx"/><text x="705.0" y="389.0" class="ht" textLength="23.5" lengthAdjust="spacingAndGlyphs">£413k</text>
<polygon points="726.3,380.3 733.5,367.8 748.0,367.8 755.3,380.3 748.0,392.9 733.5,392.9" class="hx"/><text x="740.8" y="382.9" class="ht" textLength="23.5" lengthAdjust="spacingAndGlyphs">£264k</text>
<polygon points="742.5,386.4 749.8,373.8 764.2,373.8 771.5,386.4 764.2,398.9 749.8,398.9" class="hx"/><text x="757.0" y="389.0" class="ht" textLength="23.5" lengthAdjust="spacingAndGlyphs">£264k</text>
<polygon points="739.5,370.0 746.8,357.4 761.2,357.4 768.5,370.0 761.2,382.6 746.8,382.6" class="hx"/><text x="754.0" y="372.6" class="ht" textLength="23.5" lengthAdjust="spacingAndGlyphs">£198k</text>
<polygon points="710.0,393.6 717.2,381.1 731.8,381.1 739.0,393.6 731.8,406.2 717.2,406.2" class="hx"/><text x="724.5" y="396.2" class="ht" textLength="23.5" lengthAdjust="spacingAndGlyphs">£198k</text>
<polygon points="691.5,402.8 698.8,390.2 713.2,390.2 720.5,402.8 713.2,415.4 698.8,415.4" class="hx"/><text x="706.0" y="405.4" class="ht" textLength="23.5" lengthAdjust="spacingAndGlyphs">£297k</text>
<polygon points="671.2,411.0 678.5,398.4 693.0,398.4 700.2,411.0 693.0,423.6 678.5,423.6" class="hx"/><text x="685.7" y="413.6" class="ht" textLength="23.5" lengthAdjust="spacingAndGlyphs">£264k</text>
<polygon points="742.5,404.8 749.8,392.2 764.2,392.2 771.5,404.8 764.2,417.4 749.8,417.4" class="hx"/><text x="757.0" y="407.4" class="ht" textLength="23.5" lengthAdjust="spacingAndGlyphs">£264k</text>
<polygon points="730.5,406.8 737.8,394.2 752.2,394.2 759.5,406.8 752.2,419.4 737.8,419.4" class="hx"/><text x="745.0" y="409.4" class="ht" textLength="23.5" lengthAdjust="spacingAndGlyphs">£264k</text>
<polygon points="720.2,415.0 727.5,402.4 742.0,402.4 749.2,415.0 742.0,427.6 727.5,427.6" class="hx"/><text x="734.7" y="417.6" class="ht" textLength="23.5" lengthAdjust="spacingAndGlyphs">£264k</text>
<polygon points="759.0,421.0 766.2,408.4 780.8,408.4 788.0,421.0 780.8,433.6 766.2,433.6" class="hx"/><text x="773.5" y="423.6" class="ht" textLength="23.5" lengthAdjust="spacingAndGlyphs">£264k</text>
<polygon points="761.0,415.0 768.2,402.4 782.8,402.4 790.0,415.0 782.8,427.6 768.2,427.6" class="hx"/><text x="775.5" y="417.6" class="ht" textLength="23.5" lengthAdjust="spacingAndGlyphs">£264k</text>
<polygon points="668.2,424.2 675.5,411.6 690.0,411.6 697.2,424.2 690.0,436.8 675.5,436.8" class="hx"/><text x="682.7" y="426.8" class="ht" textLength="23.5" lengthAdjust="spacingAndGlyphs">£591k</text>
<polygon points="712.0,431.3 719.2,418.8 733.8,418.8 741.0,431.3 733.8,443.9 719.2,443.9" class="hx"/><text x="726.5" y="433.9" class="ht" textLength="23.5" lengthAdjust="spacingAndGlyphs">£264k</text>
<polygon points="718.2,435.4 725.5,422.8 740.0,422.8 747.2,435.4 740.0,447.9 725.5,447.9" class="hx"/><text x="732.7" y="438.0" class="ht" textLength="23.5" lengthAdjust="spacingAndGlyphs">£264k</text>
<polygon points="693.7,430.3 701.0,417.8 715.5,417.8 722.7,430.3 715.5,442.9 701.0,442.9" class="hx"/><text x="708.2" y="432.9" class="ht" textLength="23.5" lengthAdjust="spacingAndGlyphs">£374k</text>
<polygon points="669.2,453.8 676.5,441.2 691.0,441.2 698.2,453.8 691.0,466.4 676.5,466.4" class="hx"/><text x="683.7" y="456.4" class="ht" textLength="23.5" lengthAdjust="spacingAndGlyphs">£191k</text>
<polygon points="593.5,459.0 600.8,446.4 615.2,446.4 622.5,459.0 615.2,471.6 600.8,471.6" class="hx"/><text x="608.0" y="461.6" class="ht" textLength="23.5" lengthAdjust="spacingAndGlyphs">£264k</text>
<polygon points="618.2,462.0 625.5,449.4 640.0,449.4 647.2,462.0 640.0,474.6 625.5,474.6" class="hx"/><text x="632.7" y="464.6" class="ht" textLength="23.5" lengthAdjust="spacingAndGlyphs">£576k</text>
<polygon points="595.7,470.5 603.0,457.9 617.5,457.9 624.7,470.5 617.5,483.1 603.0,483.1" class="hx"/><text x="610.2" y="473.1" class="ht" textLength="23.5" lengthAdjust="spacingAndGlyphs">£264k</text>
<polygon points="612.0,474.6 619.2,462.1 633.8,462.1 641.0,474.6 633.8,487.2 619.2,487.2" class="hx"/><text x="626.5" y="477.2" class="ht" textLength="23.5" lengthAdjust="spacingAndGlyphs">£264k</text>
<polygon points="648.8,480.7 656.0,468.1 670.5,468.1 677.8,480.7 670.5,493.2 656.0,493.2" class="hx"/><text x="663.3" y="483.3" class="ht" textLength="23.5" lengthAdjust="spacingAndGlyphs">£264k</text>
<polygon points="652.8,465.4 660.0,452.8 674.5,452.8 681.8,465.4 674.5,477.9 660.0,477.9" class="hx"/><text x="667.3" y="468.0" class="ht" textLength="23.5" lengthAdjust="spacingAndGlyphs">£264k</text>
<polygon points="641.5,465.4 648.8,452.8 663.2,452.8 670.5,465.4 663.2,477.9 648.8,477.9" class="hx"/><text x="656.0" y="468.0" class="ht" textLength="23.5" lengthAdjust="spacingAndGlyphs">£644k</text>
<polygon points="710.0,457.2 717.2,444.6 731.8,444.6 739.0,457.2 731.8,469.8 717.2,469.8" class="hx"/><text x="724.5" y="459.8" class="ht" textLength="23.5" lengthAdjust="spacingAndGlyphs">£264k</text>
<polygon points="712.0,466.4 719.2,453.8 733.8,453.8 741.0,466.4 733.8,478.9 719.2,478.9" class="hx"/><text x="726.5" y="469.0" class="ht" textLength="23.5" lengthAdjust="spacingAndGlyphs">£422k</text>
<polygon points="803.5,369.0 810.8,356.4 825.2,356.4 832.5,369.0 825.2,381.6 810.8,381.6" class="hx"/><text x="818.0" y="371.6" class="ht" textLength="23.5" lengthAdjust="spacingAndGlyphs">£264k</text>
<polygon points="804.9,375.2 812.1,362.6 826.6,362.6 833.9,375.2 826.6,387.8 812.1,387.8" class="hx"/><text x="819.4" y="377.8" class="ht" textLength="23.5" lengthAdjust="spacingAndGlyphs">£132k</text>
<polygon points="662.0,513.4 669.2,500.8 683.8,500.8 691.0,513.4 683.8,525.9 669.2,525.9" class="hx"/><text x="676.5" y="516.0" class="ht" textLength="23.5" lengthAdjust="spacingAndGlyphs">£660k</text>
<polygon points="699.8,514.4 707.0,501.8 721.5,501.8 728.8,514.4 721.5,526.9 707.0,526.9" class="hx"/><text x="714.3" y="517.0" class="ht" textLength="23.5" lengthAdjust="spacingAndGlyphs">£264k</text>
<polygon points="694.7,517.4 702.0,504.8 716.5,504.8 723.7,517.4 716.5,529.9 702.0,529.9" class="hx"/><text x="709.2" y="520.0" class="ht" textLength="23.5" lengthAdjust="spacingAndGlyphs">£495k</text>
<polygon points="755.9,534.8 763.1,522.2 777.6,522.2 784.9,534.8 777.6,547.3 763.1,547.3" class="hx"/><text x="770.4" y="537.4" class="ht" textLength="23.5" lengthAdjust="spacingAndGlyphs">£880k</text>
<polygon points="712.0,551.1 719.2,538.6 733.8,538.6 741.0,551.1 733.8,563.6 719.2,563.6" class="hx"/><text x="726.5" y="553.7" class="ht" textLength="23.5" lengthAdjust="spacingAndGlyphs">£660k</text>
<polygon points="782.5,550.1 789.8,537.6 804.2,537.6 811.5,550.1 804.2,562.6 789.8,562.6" class="hx"/><text x="797.0" y="552.7" class="ht" textLength="23.5" lengthAdjust="spacingAndGlyphs">£660k</text>
<polygon points="677.3,600.3 684.5,587.8 699.0,587.8 706.3,600.3 699.0,612.8 684.5,612.8" class="hx"/><text x="691.8" y="602.9" class="ht" textLength="23.5" lengthAdjust="spacingAndGlyphs">£276k</text>
<polygon points="730.5,582.0 737.8,569.5 752.2,569.5 759.5,582.0 752.2,594.5 737.8,594.5" class="hx"/><text x="745.0" y="584.6" class="ht" textLength="23.5" lengthAdjust="spacingAndGlyphs">£528k</text>
<polygon points="734.5,602.0 741.8,589.5 756.2,589.5 763.5,602.0 756.2,614.5 741.8,614.5" class="hx"/><text x="749.0" y="604.6" class="ht" textLength="23.5" lengthAdjust="spacingAndGlyphs">£341k</text>
<polygon points="731.5,635.2 738.8,622.7 753.2,622.7 760.5,635.2 753.2,647.8 738.8,647.8" class="hx"/><text x="746.0" y="637.8" class="ht" textLength="23.5" lengthAdjust="spacingAndGlyphs">£264k</text>
<polygon points="725.3,637.2 732.5,624.7 747.0,624.7 754.3,637.2 747.0,649.8 732.5,649.8" class="hx"/><text x="739.8" y="639.8" class="ht" textLength="23.5" lengthAdjust="spacingAndGlyphs">£330k</text>
<polygon points="805.9,646.4 813.1,633.9 827.6,633.9 834.9,646.4 827.6,658.9 813.1,658.9" class="hx"/><text x="820.4" y="649.0" class="ht" textLength="23.5" lengthAdjust="spacingAndGlyphs">£132k</text>
<polygon points="829.0,590.0 836.2,577.5 850.8,577.5 858.0,590.0 850.8,602.5 836.2,602.5" class="hx"/><text x="843.5" y="592.6" class="ht" textLength="23.5" lengthAdjust="spacingAndGlyphs">£660k</text>
<polygon points="652.8,677.0 660.0,664.5 674.5,664.5 681.8,677.0 674.5,689.5 660.0,689.5" class="hx"/><text x="667.3" y="679.6" class="ht" textLength="23.5" lengthAdjust="spacingAndGlyphs">£264k</text>
<polygon points="640.5,679.0 647.8,666.5 662.2,666.5 669.5,679.0 662.2,691.5 647.8,691.5" class="hx"/><text x="655.0" y="681.6" class="ht" textLength="23.5" lengthAdjust="spacingAndGlyphs">£264k</text>
<polygon points="647.7,686.2 655.0,673.7 669.5,673.7 676.7,686.2 669.5,698.8 655.0,698.8" class="hx"/><text x="662.2" y="688.8" class="ht" textLength="23.5" lengthAdjust="spacingAndGlyphs">£743k</text>
<polygon points="620.2,709.7 627.5,697.2 642.0,697.2 649.2,709.7 642.0,722.2 627.5,722.2" class="hx"/><text x="634.7" y="712.3" class="ht" textLength="23.5" lengthAdjust="spacingAndGlyphs">£660k</text>
<polygon points="719.2,703.6 726.5,691.1 741.0,691.1 748.2,703.6 741.0,716.1 726.5,716.1" class="hx"/><text x="733.7" y="706.2" class="ht" textLength="23.5" lengthAdjust="spacingAndGlyphs">£132k</text>
<polygon points="732.5,739.0 739.8,726.5 754.2,726.5 761.5,739.0 754.2,751.5 739.8,751.5" class="hx"/><text x="747.0" y="741.6" class="ht" textLength="23.5" lengthAdjust="spacingAndGlyphs">£198k</text>
<polygon points="811.5,717.0 818.8,704.5 833.2,704.5 840.5,717.0 833.2,729.5 818.8,729.5" class="hx"/><text x="826.0" y="719.6" class="ht" textLength="23.5" lengthAdjust="spacingAndGlyphs">£264k</text>
<polygon points="788.5,731.0 795.8,718.5 810.2,718.5 817.5,731.0 810.2,743.5 795.8,743.5" class="hx"/><text x="803.0" y="733.6" class="ht" textLength="23.5" lengthAdjust="spacingAndGlyphs">£132k</text>
<polygon points="833.2,767.6 840.5,755.1 855.0,755.1 862.2,767.6 855.0,780.1 840.5,780.1" class="hx"/><text x="847.7" y="770.2" class="ht" textLength="23.5" lengthAdjust="spacingAndGlyphs">£264k</text>
<polygon points="838.5,315.0 845.8,302.4 860.2,302.4 867.5,315.0 860.2,327.6 845.8,327.6" class="hx"/><text x="853.0" y="317.6" class="ht" textLength="23.5" lengthAdjust="spacingAndGlyphs">£264k</text>
<polygon points="853.2,315.0 860.5,302.4 875.0,302.4 882.2,315.0 875.0,327.6 860.5,327.6" class="hx"/><text x="867.7" y="317.6" class="ht" textLength="23.5" lengthAdjust="spacingAndGlyphs">£264k</text>
<polygon points="1033.5,383.8 1040.8,371.2 1055.2,371.2 1062.5,383.8 1055.2,396.3 1040.8,396.3" class="hx"/><text x="1048.0" y="386.4" class="ht" textLength="23.5" lengthAdjust="spacingAndGlyphs">£660k</text>
<polygon points="1053.2,401.5 1060.5,388.9 1075.0,388.9 1082.2,401.5 1075.0,414.1 1060.5,414.1" class="hx"/><text x="1067.7" y="404.1" class="ht" textLength="23.5" lengthAdjust="spacingAndGlyphs">£396k</text>
<polygon points="903.2,431.7 910.5,419.1 925.0,419.1 932.2,431.7 925.0,444.2 910.5,444.2" class="hx"/><text x="917.7" y="434.3" class="ht" textLength="23.5" lengthAdjust="spacingAndGlyphs">£462k</text>
<polygon points="853.5,469.0 860.8,456.4 875.2,456.4 882.5,469.0 875.2,481.6 860.8,481.6" class="hx"/><text x="868.0" y="471.6" class="ht" textLength="23.5" lengthAdjust="spacingAndGlyphs">£132k</text>
<polygon points="978.4,491.6 985.6,479.1 1000.1,479.1 1007.4,491.6 1000.1,504.2 985.6,504.2" class="hx"/><text x="992.9" y="494.2" class="ht" textLength="23.5" lengthAdjust="spacingAndGlyphs">£495k</text>
<polygon points="1027.1,487.3 1034.3,474.8 1048.8,474.8 1056.1,487.3 1048.8,499.9 1034.3,499.9" class="hx"/><text x="1041.6" y="489.9" class="ht" textLength="23.5" lengthAdjust="spacingAndGlyphs">£462k</text>
<polygon points="938.2,510.0 945.5,497.4 960.0,497.4 967.2,510.0 960.0,522.5 945.5,522.5" class="hx"/><text x="952.7" y="512.6" class="ht" textLength="23.5" lengthAdjust="spacingAndGlyphs">£231k</text>
<polygon points="940.5,542.6 947.8,530.1 962.2,530.1 969.5,542.6 962.2,555.1 947.8,555.1" class="hx"/><text x="955.0" y="545.2" class="ht" textLength="23.5" lengthAdjust="spacingAndGlyphs">£264k</text>
<polygon points="972.9,569.7 980.1,557.2 994.6,557.2 1001.9,569.7 994.6,582.2 980.1,582.2" class="hx"/><text x="987.4" y="572.3" class="ht" textLength="23.5" lengthAdjust="spacingAndGlyphs">£198k</text>
<polygon points="847.2,610.5 854.5,598.0 869.0,598.0 876.2,610.5 869.0,623.0 854.5,623.0" class="hx"/><text x="861.7" y="613.1" class="ht" textLength="23.5" lengthAdjust="spacingAndGlyphs">£528k</text>
<polygon points="922.5,613.0 929.8,600.5 944.2,600.5 951.5,613.0 944.2,625.5 929.8,625.5" class="hx"/><text x="937.0" y="615.6" class="ht" textLength="23.5" lengthAdjust="spacingAndGlyphs">£341k</text>
<polygon points="916.1,641.8 923.4,629.2 937.9,629.2 945.1,641.8 937.9,654.3 923.4,654.3" class="hx"/><text x="930.6" y="644.4" class="ht" textLength="23.5" lengthAdjust="spacingAndGlyphs">£132k</text>
<polygon points="983.7,623.0 991.0,610.5 1005.5,610.5 1012.7,623.0 1005.5,635.5 991.0,635.5" class="hx"/><text x="998.2" y="625.6" class="ht" textLength="23.5" lengthAdjust="spacingAndGlyphs">£264k</text>
<polygon points="1044.9,636.2 1052.2,623.7 1066.7,623.7 1073.9,636.2 1066.7,648.8 1052.2,648.8" class="hx"/><text x="1059.4" y="638.8" class="ht" textLength="23.5" lengthAdjust="spacingAndGlyphs">£264k</text>
<polygon points="1046.2,629.8 1053.5,617.2 1068.0,617.2 1075.2,629.8 1068.0,642.3 1053.5,642.3" class="hx"/><text x="1060.7" y="632.4" class="ht" textLength="23.5" lengthAdjust="spacingAndGlyphs">£528k</text>
<polygon points="835.7,657.9 843.0,645.4 857.5,645.4 864.7,657.9 857.5,670.4 843.0,670.4" class="hx"/><text x="850.2" y="660.5" class="ht" textLength="23.5" lengthAdjust="spacingAndGlyphs">£429k</text>
<polygon points="853.5,668.9 860.8,656.4 875.2,656.4 882.5,668.9 875.2,681.4 860.8,681.4" class="hx"/><text x="868.0" y="671.5" class="ht" textLength="23.5" lengthAdjust="spacingAndGlyphs">£132k</text>
<polygon points="940.3,682.7 947.5,670.2 962.0,670.2 969.3,682.7 962.0,695.2 947.5,695.2" class="hx"/><text x="954.8" y="685.3" class="ht" textLength="23.5" lengthAdjust="spacingAndGlyphs">£726k</text>
<polygon points="899.5,693.6 906.8,681.1 921.2,681.1 928.5,693.6 921.2,706.1 906.8,706.1" class="hx"/><text x="914.0" y="696.2" class="ht" textLength="23.5" lengthAdjust="spacingAndGlyphs">£264k</text>
<polygon points="919.9,696.0 927.1,683.5 941.6,683.5 948.9,696.0 941.6,708.5 927.1,708.5" class="hx"/><text x="934.4" y="698.6" class="ht" textLength="23.5" lengthAdjust="spacingAndGlyphs">£264k</text>
<polygon points="911.0,690.3 918.2,677.8 932.8,677.8 940.0,690.3 932.8,702.8 918.2,702.8" class="hx"/><text x="925.5" y="692.9" class="ht" textLength="23.5" lengthAdjust="spacingAndGlyphs">£198k</text>
<polygon points="870.9,712.8 878.1,700.2 892.6,700.2 899.9,712.8 892.6,725.3 878.1,725.3" class="hx"/><text x="885.4" y="715.4" class="ht" textLength="23.5" lengthAdjust="spacingAndGlyphs">£330k</text>
<polygon points="1042.3,701.8 1049.5,689.2 1064.0,689.2 1071.3,701.8 1064.0,714.3 1049.5,714.3" class="hx"/><text x="1056.8" y="704.4" class="ht" textLength="23.5" lengthAdjust="spacingAndGlyphs">£264k</text>
<polygon points="1018.5,756.1 1025.8,743.6 1040.2,743.6 1047.5,756.1 1040.2,768.6 1025.8,768.6" class="hx"/><text x="1033.0" y="758.7" class="ht" textLength="23.5" lengthAdjust="spacingAndGlyphs">£660k</text>
<polygon points="853.5,772.7 860.8,760.2 875.2,760.2 882.5,772.7 875.2,785.2 860.8,785.2" class="hx"/><text x="868.0" y="775.3" class="ht" textLength="23.5" lengthAdjust="spacingAndGlyphs">£264k</text>
<polygon points="895.5,771.4 902.8,758.9 917.2,758.9 924.5,771.4 917.2,783.9 902.8,783.9" class="hx"/><text x="910.0" y="774.0" class="ht" textLength="23.5" lengthAdjust="spacingAndGlyphs">£264k</text>
</svg>
<div id="zc"><div class="zb">+</div><div class="zb" style="top:17px">&#8722;</div></div>
<div id="legend"><div id="lgt">Legend</div><div class="lgi" style="top:28px"><span style="background:#5b62e8"></span>Companies</div><div class="lgi" style="top:47px"><span style="background:#d9483b"></span>Projects</div></div>
<div id="fab"><svg width="22" height="22" viewBox="0 0 22 22"><circle cx="11" cy="11" r="9.5" fill="none" stroke="#2a2230" stroke-width="1.6"/><circle cx="11" cy="8" r="2" fill="#7a3a2a" stroke="#2a2230" stroke-width="1"/><circle cx="7.5" cy="13.5" r="2" fill="#7a3a2a" stroke="#2a2230" stroke-width="1"/><circle cx="14.5" cy="13.5" r="2" fill="#7a3a2a" stroke="#2a2230" stroke-width="1"/><path d="M11 10 V12 M9 13.5 H13" stroke="#2a2230" stroke-width="1"/></svg></div></div>
<div id="mtop"></div><div id="mline"></div><div id="bottom"><div id="bmarks"></div></div><div id="rborder"></div><div id="rcorner"></div><div id="rstrip"></div><div id="rvl"></div>
<div id="top">
  <div id="tframe"></div><div id="tmarks"></div><div id="rmarks"></div>
  <div id="thouse"><svg width="26" height="22" viewBox="0 0 26 22"><path d="M7.5 2.2 L12 8.5 H24 V21 H11.5 V8.5Z M7.5 2.2 H18.6 L24.5 8.5 H12Z" fill="#a6a8ae"/><path d="M0.8 9.3 L7.3 1.8 H18.6 L25.2 9 M2 9 V20 Q2 21 3 21 H23 Q24 21 24 20 V8.6 M7.5 2.2 L12.3 8.6 H24.5 M11.7 8.6 V21 M2.8 1.3 V4.4 M6.9 16 V21 M16.2 14.2 H19.6" fill="none" stroke="#161622" stroke-width="1.7" stroke-linejoin="round" stroke-linecap="round"/><circle cx="6.9" cy="11.6" r="1.1" fill="#161622"/></svg></div>
  <div id="tcount">98 Projects</div>
  <div id="tsort"><svg width="22" height="22" viewBox="0 0 22 22"><path d="M2.6 0.6 V20.3 M0 17.6 L2.6 20.3 L5.2 17.6 M8.4 1.6 H19.6 M8.4 6 H17.5 M8.4 10.5 H14 M8.4 14.8 H12" fill="none" stroke="#161622" stroke-width="1.7" stroke-linecap="round" stroke-linejoin="round"/></svg><span>Newest listed</span><svg class="chev" width="20" height="12" viewBox="0 0 20 12"><path d="M1.5 1.5 L9.8 9.8 L18.1 1.5" fill="none" stroke="#45464d" stroke-width="1.8" stroke-linecap="round" stroke-linejoin="round"/></svg></div>
  <div id="tdiv"></div>
  <div id="tprice">£3,432,000</div>
  <div id="tdates">Created: <b>02-10-2024</b>&nbsp; Updated: <b>02-10-2025</b></div>
  <div class="tdot" style="top:100px"></div><div class="tdot" style="top:115px"></div><div class="tdot" style="top:130px"></div>
  <div id="taddr">Various Locations Throughout Milton Keynes, None, Milton Keyne...</div>
  <div id="tsub">Amplius Living - Repair And Replacement Roofing Works</div>
  <div id="tchips"><div class="tchip" style="width:198.5px">Est. Start: 2024-12-11</div><div class="tchip" style="width:221px">Project Stage: Contract</div><div class="tchip green" style="width:134.4px">On site - 47%</div></div>
  <div id="tshow">Show Companies <svg width="17" height="12" viewBox="0 0 17 12" style="position:absolute;left:166px;top:5px"><path d="M1 1.2 L8.2 9.4 L15.4 1.2" fill="none" stroke="#1d1d26" stroke-width="1.7" stroke-linecap="round" stroke-linejoin="round"/></svg></div>
</div>
</body></html>
